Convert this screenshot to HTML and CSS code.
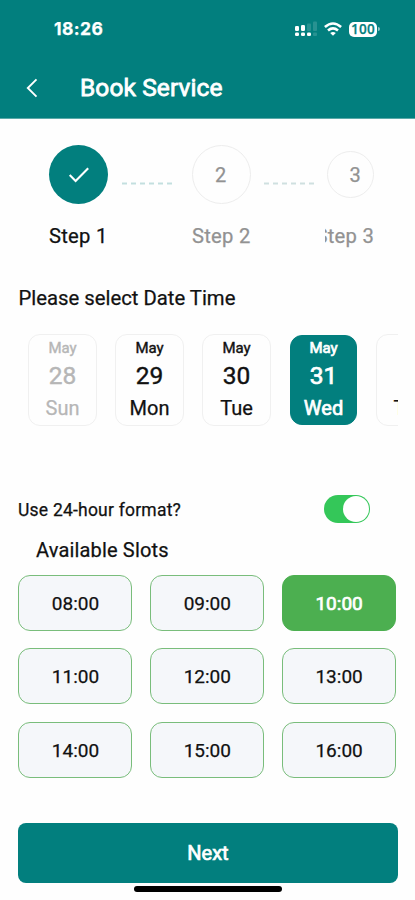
FILE: index.html
```html
<!DOCTYPE html>
<html lang="en">
<head>
<meta charset="utf-8">
<meta name="viewport" content="width=device-width, initial-scale=1">
<title>Book Service</title>
<link rel="stylesheet" href="styles.css">
</head>
<body>
<div class="screen">
  <header class="header">
    <div class="status">
      <span class="clock">18:26</span>
      <div class="indicators">
        <svg class="signal" width="23" height="16" viewBox="0 0 23 16">
          <g fill="#fff"><rect x="0" y="5" width="4" height="5" rx="1.3"/><rect x="6" y="4" width="4" height="6" rx="1.3"/><rect x="0" y="11.500" width="4" height="3.500" rx="1.300"/><rect x="6" y="11.500" width="4" height="3.500" rx="1.300"/><rect x="12" y="11.500" width="4" height="3.500" rx="1.300"/></g>
          <g fill="#fff" opacity=".15"><rect x="12" y="2.500" width="4" height="7.500" rx="1"/><rect x="18" y="0.500" width="4" height="9.500" rx="1"/><rect x="18" y="11.500" width="4" height="3.500" rx="1"/></g>
        </svg>
        <svg class="wifi" width="18" height="14" viewBox="0 0 18 14" fill="none" stroke="#fff" stroke-width="2.600">
          <path d="M.9 5Q9-2 17.100 5M4 8.400Q9 4.200 14 8.400"/><path d="M9 13.800L6.200 11Q9 8.800 11.800 11Z" fill="#fff" stroke="none"/>
        </svg>
        <span class="battery">100</span><i class="battery-tip"></i>
      </div>
    </div>
    <div class="titlebar">
      <svg class="back" width="12" height="20" viewBox="0 0 12 20" fill="none" stroke="#fff" stroke-width="1.900"><path d="M10.500 1.300L1.800 10L10.500 18.700"/></svg>
      <h1>Book Service</h1>
    </div>
  </header>

  <main>
    <section class="stepper">
      <div class="step done">
        <div class="bubble"><svg width="22" height="18" viewBox="0 0 22 18" fill="none" stroke="#fff" stroke-width="2.100"><path d="M1.700 9L7.600 15L20.200 2.300"/></svg></div>
        <div class="label">Step 1</div>
      </div>
      <svg class="dots" width="51" height="3" viewBox="0 0 51 3"><path d="M0 1.500H51" stroke="#c3dfdf" stroke-width="1.800" stroke-dasharray="5 4"/></svg>
      <div class="step">
        <div class="bubble">2</div>
        <div class="label">Step 2</div>
      </div>
      <svg class="dots second" width="51" height="3" viewBox="0 0 51 3"><path d="M0 1.500H51" stroke="#cfe0e0" stroke-width="1.800" stroke-dasharray="5 4"/></svg>
      <div class="step last">
        <div class="bubble">3</div>
        <div class="label">Step 3</div>
      </div>
    </section>

    <h2>Please select Date Time</h2>
    <div class="dates">
      <div class="date past"><span class="month">May</span><span class="day">28</span><span class="week">Sun</span></div>
      <div class="date"><span class="month">May</span><span class="day">29</span><span class="week">Mon</span></div>
      <div class="date"><span class="month">May</span><span class="day">30</span><span class="week">Tue</span></div>
      <div class="date active"><span class="month">May</span><span class="day">31</span><span class="week">Wed</span></div>
      <div class="date"><span class="month">&nbsp;</span><span class="day">&nbsp;</span><span class="week">Thu</span></div>
    </div>

    <div class="format">
      <span class="question">Use 24-hour format?</span>
      <span class="switch"></span>
    </div>
    <h3>Available Slots</h3>
    <div class="slots">
      <div class="slot">08:00</div><div class="slot">09:00</div><div class="slot chosen">10:00</div>
      <div class="slot">11:00</div><div class="slot">12:00</div><div class="slot">13:00</div>
      <div class="slot">14:00</div><div class="slot">15:00</div><div class="slot">16:00</div>
    </div>
    <div class="next">Next</div>
  </main>
  <div class="home"></div>
</div>
</body>
</html>
```
FILE: styles.css
```css
* { box-sizing: border-box; }
body {
  margin: 0;
  background: #fefefe;
  color: #111;
  font-family: Roboto, "Liberation Sans", sans-serif;
  -webkit-text-stroke: 0.25px currentColor;
}
h1, h2, h3 { margin: 0; font-weight: 400; }
svg { display: block; flex: none; }
.screen { width: 415px; height: 900px; overflow: hidden; }

.header { height: 119px; background: #027f7e; color: #fff; border-bottom: 1px solid #5aa9a8; }
.status { display: flex; justify-content: space-between; height: 58px; padding: 0 35px 0 54px; }
.clock { font: 700 17.5px/58px Inter, sans-serif; letter-spacing: .4px; }
.indicators { display: flex; align-items: center; }
.signal { margin-right: 6px; }
.wifi { margin-right: 7px; }
.battery {
  width: 28px; height: 15px; border-radius: 5px; background: #fff; color: #027f7e;
  font: 600 13.5px/15px "Open Sans", sans-serif; text-align: center; letter-spacing: .2px;
}
.battery-tip { width: 2px; height: 4px; margin-left: 1px; border-radius: 0 2px 2px 0; background: #8cc5c4; }
.titlebar { display: flex; align-items: center; height: 60px; padding-left: 26px; }
.titlebar h1 { margin-left: 42px; font-size: 24.5px; line-height: 62px; letter-spacing: .1px; -webkit-text-stroke-width: .8px; }

.stepper { display: flex; height: 132px; padding: 26px 0 0 49px; }
.step { width: 59px; color: #929292; }
.bubble {
  display: flex; align-items: center; justify-content: center;
  height: 59px; border: 1px solid #ededed; border-radius: 50%; font-size: 20px;
}
.step:nth-of-type(2) .bubble { padding-right: 2px; }
.done { color: #111; }
.done .bubble { background: #027f7e; border: 0; }
.label { margin-top: 19px; font-size: 20.2px; line-height: 26px; letter-spacing: .25px; white-space: nowrap; }
.dots { margin: 37px 19px 0 14px; }
.dots.second { margin: 37px 10px 0 13px; }
.last { display: flex; flex-direction: column; align-items: flex-end; width: 49px; overflow: hidden; }
.last .bubble { width: 47px; height: 47px; margin: 6px 0; padding-left: 9px; }

h2 { padding-left: 18.5px; margin-top: 34px; font-size: 20.3px; line-height: 26px; }
.dates { display: flex; gap: 18px; width: 370px; height: 92px; margin: 23px 0 0 28px; overflow: hidden; }
.date {
  display: flex; flex: none; flex-direction: column; align-items: center;
  width: 69px; height: 92px; padding-top: 4px;
  border: 1px solid #f0f0f0; border-radius: 12px;
}
.month { font-size: 15px; line-height: 18px; -webkit-text-stroke-width: .4px; }
.day { font-size: 24.5px; line-height: 38px; -webkit-text-stroke-width: .4px; }
.week { font-size: 20px; line-height: 26px; }
.past { color: #b6b6b6; }
.date.active { width: 67px; margin: 1px 1px 0; height: 90px; padding-top: 3px; background: #027f7e; border-color: #027f7e; color: #fff; }
.active span { -webkit-text-stroke-width: .7px; }

.format { display: flex; align-items: center; justify-content: space-between; height: 28px; margin: 69px 45px 0 18px; }
.question { padding-top: 2px; font-size: 17.5px; letter-spacing: .22px; }
.switch { display: flex; justify-content: flex-end; width: 46px; height: 28px; padding: 1px; border-radius: 14px; background: #34c759; }
.switch::after { content: ""; width: 26px; height: 26px; border-radius: 50%; background: #fff; }
h3 { margin-top: 14px; padding-left: 36px; font-size: 20px; line-height: 26px; letter-spacing: .16px; }
.slots { display: grid; grid-template-columns: repeat(3, 114px); gap: 17.300px 17.800px; margin: 12px 0 0 18px; }
.slot {
  height: 56px; border: 1px solid #79bd7b; border-radius: 12px; background: #f5f7fa;
  padding-left: 1px; font-size: 19px; line-height: 55px; text-align: center;
}
.chosen { background: #4caf50; border-color: #4caf50; color: #fff; -webkit-text-stroke-width: .7px; }
.next {
  height: 60px; margin: 45px 17px 0 18px; border-radius: 8px; background: #027f7e;
  color: #fff; font-size: 20px; line-height: 60px; text-align: center; -webkit-text-stroke-width: .7px;
}
.home { width: 148px; height: 6px; margin: 3px 0 0 134px; border-radius: 3px; background: #000; }
```
